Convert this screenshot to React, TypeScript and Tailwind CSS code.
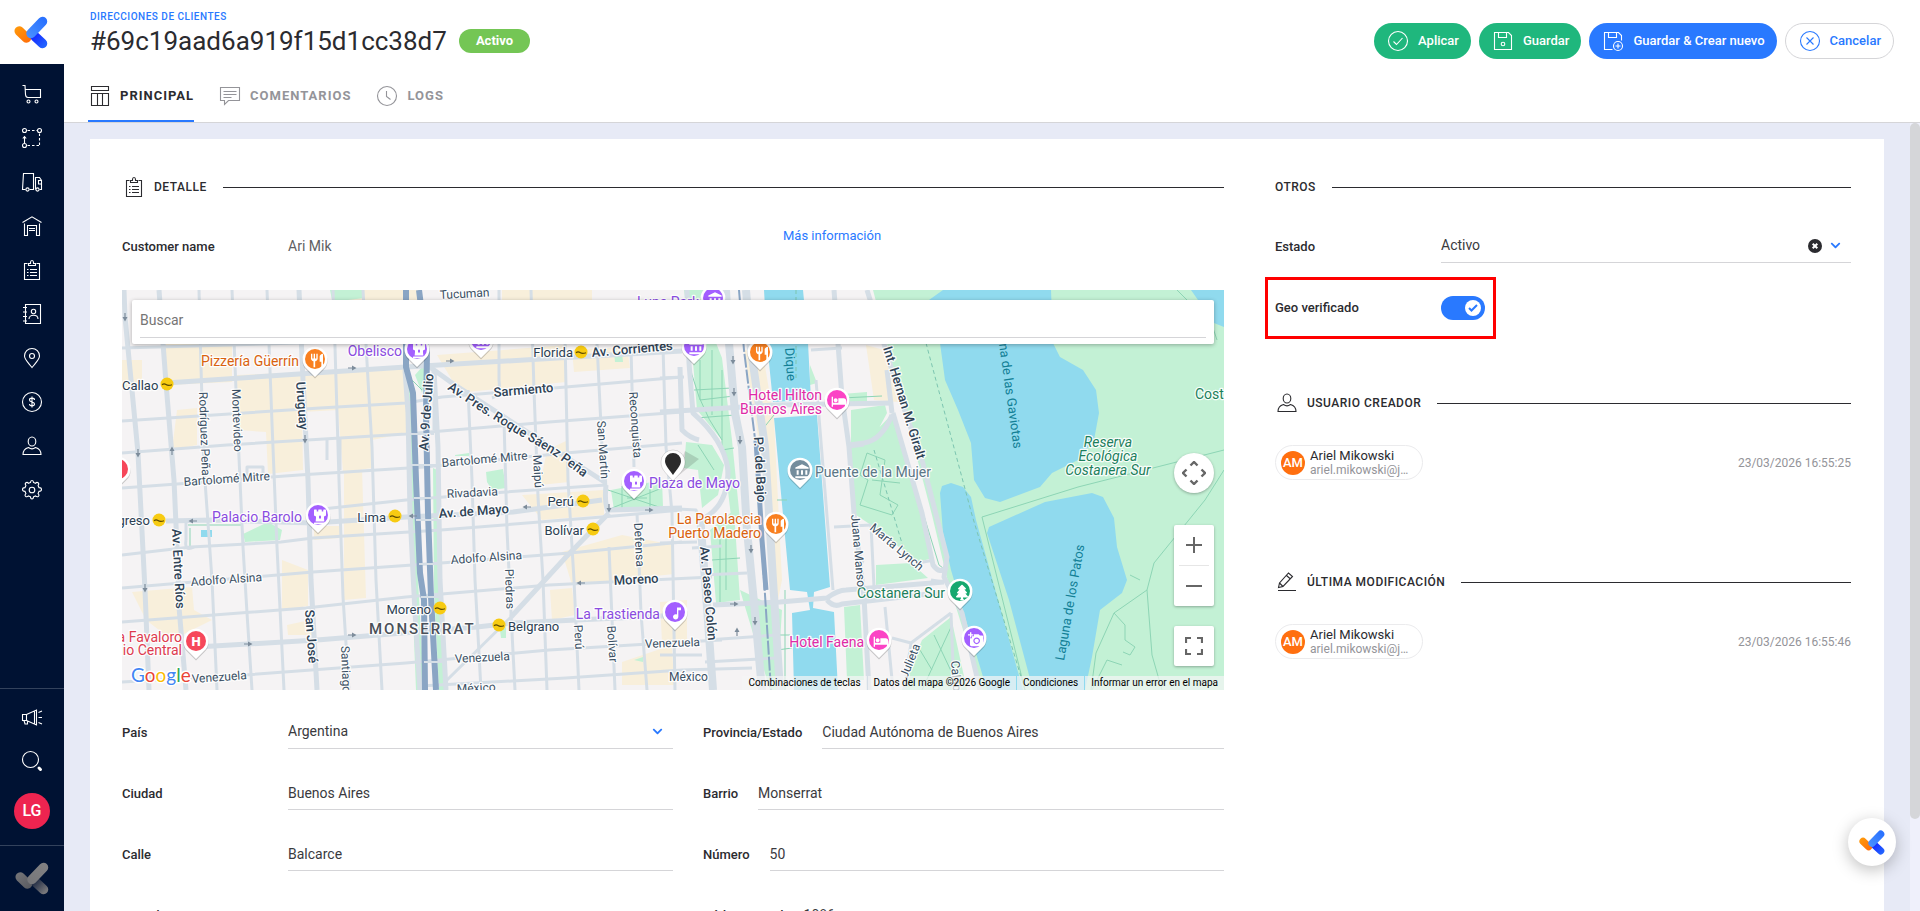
import React from "react";
import { FaChessRook, FaTree, FaChevronDown } from "react-icons/fa";
import { MdRestaurant, MdLocalHotel, MdMusicNote, MdAddAPhoto, MdAccountBalance } from "react-icons/md";

/* ---------- line icons ---------- */

type IconName =
  | "cart" | "route" | "truck" | "warehouse" | "clipboard" | "contacts" | "pin" | "dollar" | "user" | "gear"
  | "megaphone" | "search" | "table" | "comment" | "clock" | "check" | "save" | "saveAdd" | "close" | "pencil";

const shapes: Record<IconName, React.ReactNode> = {
  cart: (
    <>
      <path d="M.5 1.500H3L3.500 10.500Q3.700 13.500 6 13.500H18.500V5.500H3.300" />
      <circle cx="6.500" cy="17.500" r="1.500" />
      <circle cx="14.500" cy="17.500" r="1.500" />
    </>
  ),
  route: (
    <>
      <circle cx="2.500" cy="2.500" r="2" />
      <circle cx="17.500" cy="2.500" r="2" />
      <circle cx="2.500" cy="17.500" r="2" />
      <path d="M5.500 2.500h9.500M17.500 5.500v12M5.500 17.500h12" strokeDasharray="2.500 2" />
      <path d="M2.500 15V8.500M.8 10.500l1.700-2 1.700 2" />
    </>
  ),
  truck: (
    <>
      <path d="M3.500 17.500H.5L1.500 1.500h10v16H7.500" />
      <path d="M13.500 17.500V5.500h4l2 3v9h-2" />
      <path d="M19.500 8.500h-3v3.500h3" />
      <circle cx="5.500" cy="17.500" r="1.600" />
      <circle cx="15.500" cy="17.500" r="1.600" />
    </>
  ),
  warehouse: (
    <>
      <path d="M.5 6.500L10 .8l9.500 5.700" />
      <path d="M2.500 7.500v12h3V9.500h9v10h3v-12" />
      <path d="M7 12.500h6M7 14.500h6" />
    </>
  ),
  clipboard: (
    <>
      <path d="M5.500 3.500h-3v16h15v-16h-3" />
      <path d="M6.500 5.500V3.500h2v-1q0-2 1.500-2t1.500 2v1h2v2z" />
      <path d="M8 9.500h7M8 12.500h7M8 15.500h7M5 9.500h1.500M5 12.500h1.500M5 15.500h1.500" />
    </>
  ),
  contacts: (
    <>
      <path d="M3.500.5h15v19h-15z" />
      <path d="M1 3.500h4M1 8h4M1 12.500h4M1 17h4" />
      <circle cx="11.500" cy="7.500" r="2.200" />
      <path d="M7 15c0-5 9-5 9 0" />
    </>
  ),
  pin: (
    <>
      <path d="M10 19.500C7 15.500 2.500 11.500 2.500 8a7.500 7.500 0 0 1 15 0c0 3.500-4.500 7.500-7.500 11.500z" />
      <circle cx="10" cy="8" r="2.500" />
    </>
  ),
  dollar: (
    <>
      <circle cx="10" cy="10" r="9.500" />
      <path d="M12.500 8c0-2.500-5-2.500-5 0 0 2.300 5 1.700 5 4 0 2.500-5 2.500-5 0M10 4.500v11" />
    </>
  ),
  user: (
    <>
      <ellipse cx="10" cy="5.500" rx="3.800" ry="4.500" />
      <path d="M1 18.500c0-4.500 2-6 5.500-7 2 1.500 5 1.500 7 0 3.500 1 5.500 2.500 5.500 7z" />
    </>
  ),
  gear: (
    <>
      <circle cx="10" cy="10" r="2.800" />
      <path d="M8.500 2.500Q8.500.5 10 .5t1.500 2l2 .8q1.300-1.500 2.600-.5t0 2.800l.9 2q2.500 0 2.500 1.900t-2.500 1.900l-.9 2.200q1.500 1.600.3 2.700t-2.900-.4l-2 .9q0 2.200-1.500 2.200t-1.500-2.200l-2-.9q-1.700 1.500-2.900.4t.3-2.700L3 11.400Q.5 11.400.5 9.500T3 7.600l.9-2q-1.300-1.800 0-2.800t2.600.5z" />
    </>
  ),
  megaphone: (
    <>
      <path d="M.5 7.500h4v6h-4zM4.500 7.500L14.500 3v15l-10-4.500M12.500 4v13M2 13.500l1 3.500h2.500v-3" />
      <path d="M16.500 5.500l3.500-1.500M16.500 10.500H20M16.500 15.500l3.500 1.500" />
    </>
  ),
  search: (
    <>
      <circle cx="8.500" cy="8.500" r="8" />
      <path d="M17 17l1.500 1.500" strokeWidth="3" strokeLinecap="round" />
    </>
  ),
  table: <path d="M1.500.5h17v4h-17zM1.500 7.500h17v12h-17zM7.500 7.500v12M12.500 7.500v12" />,
  comment: <path d="M.5 1.500h19v13H8.500l-4 4v-4h-4zM3.500 5.500h13M3.500 8.500h13M3.500 11.500h8" />,
  clock: (
    <>
      <circle cx="10" cy="10" r="9.500" />
      <path d="M9.500 5v5.500l4 3" />
    </>
  ),
  check: (
    <>
      <circle cx="10" cy="10" r="9.500" />
      <path d="M5.500 10.500l3 3 6-6.500" />
    </>
  ),
  save: (
    <>
      <path d="M1.500 1.500h14l3 3v14h-17zM5.500 1.500v5h8v-5" />
      <circle cx="10" cy="13" r="1.800" />
    </>
  ),
  saveAdd: (
    <>
      <path d="M9.500 18.500h-8v-17h14l3 3v5M5.500 1.500v5h8v-5" />
      <circle cx="15" cy="15" r="4.500" />
      <path d="M15 12.500v5M12.500 15h5" />
    </>
  ),
  close: (
    <>
      <circle cx="10" cy="10" r="9.500" />
      <path d="M6.500 6.500l7 7M13.500 6.500l-7 7" />
    </>
  ),
  pencil: <path d="M1 18.500h18M1.500 15.500l1-4.500L11.500 1l4 3.500L6 14.500zM2.500 11L6 14.500M9.500 3.500l4 3.500" />,
};

function Icon({ name, className = "size-5" }: { name: IconName; className?: string }) {
  return (
    <svg viewBox="0 0 20 20" className={`shrink-0 overflow-visible ${className}`} fill="none" stroke="currentColor" strokeWidth="1.100" aria-hidden="true">
      {shapes[name]}
    </svg>
  );
}

function Logo({ className, muted = false }: { className: string; muted?: boolean }) {
  const id = React.useId();
  return (
    <svg viewBox="0 0 34 33" className={className} fill="none" strokeLinecap="round" strokeWidth="9.500" aria-hidden="true">
      <defs>
        <linearGradient id={`${id}o`} gradientUnits="userSpaceOnUse" x1="0" y1="10" x2="14" y2="27">
          <stop stopColor={muted ? "#77777a" : "#ff9d0a"} />
          <stop offset="1" stopColor={muted ? "#5a5b61" : "#ff6f0a"} />
        </linearGradient>
        <linearGradient id={`${id}d`} gradientUnits="userSpaceOnUse" x1="19" y1="19" x2="30" y2="30">
          <stop stopColor={muted ? "#1c2740" : "#1426ff"} />
          <stop offset="1" stopColor={muted ? "#77777a" : "#2262ff"} />
        </linearGradient>
        <linearGradient id={`${id}b`} gradientUnits="userSpaceOnUse" x1="30" y1="4" x2="13" y2="21">
          <stop stopColor={muted ? "#808082" : "#2a72ff"} />
          <stop offset="1" stopColor={muted ? "#77777a" : "#4a92ff"} />
        </linearGradient>
      </defs>
      <path d="M5.200 15l7.300 7" stroke={`url(#${id}o)`} />
      <path d="M21 20.500l7.500 7" stroke={`url(#${id}d)`} />
      <path d="M28.500 5.500L17 17.500" stroke={`url(#${id}b)`} />
    </svg>
  );
}

/* ---------- map ---------- */

const streets = [
  "M77 0L79 77 82 177 86 233 90 290 95 400", "M110 0L114 100 118 190 121 257 125 323 130 400",
  "M145 0L150 133 155 257 162 400", "M211 0L213 57 217 190 221 307 227 400", "M241 0L246 90 250 157 254 290 260 400",
  "M346 100L350 190 353 290 359 400", "M377 0V90Q379 105 370 108", "M382 130L385 240 389 323 393 400",
  "M409 0L412 100 416 207 421 290 425 400", "M443 50L446 190 452 290 457 400", "M475 53L480 157 484 197M487 257L493 400",
  "M509 57L512 177M515 223L519 323 525 400", "M541 57L544 157 550 223 553 400",
  "M0 58L284 50", "M0 131L198 118 284 113 320 107 444 97 560 87", "M0 163L105 155 284 144 427 132 560 122",
  "M0 198L177 185 302 177 444 163 560 153", "M191 220L284 210 384 202 484 195",
  "M0 265L69 257 159 252 191 248 319 240 480 227 560 220", "M0 298L191 282 319 273 448 263 560 252",
  "M0 332L184 318 284 307 427 295 590 287", "M0 392L123 385 284 373 427 360 560 352 600 350",
  "M298 396L444 388 560 380 630 378", "M538 88L562 87", "M125 190V177H141V190", "M64 250Q62 262 72 257M64 250V232",
  "M205 170V150M218 180V148", "M325 390L389 327", "M312 140V110", "M749 235L752 297", "M712 237L749 235",
  "M727 157L742 155M742 272L732 268", "M829 323L832 400", "M763 317L771 400", "M789 353L829 323M770 348L789 353 782 400",
  "M689 60L720 58M694 90L711 300", "M570 258L600 256M580 285L625 283M585 350L655 345M583 372L655 368",
  "M538 253L575 252M538 365H580", "M809 290L822 292M796 273L812 270", "M538 218L574 220 578 230",
];
const midRoads = [
  "M2 0L3 27 16 163 23 300 27 400", "M37 0L44 93 52 190 55 257 57 317 64 400", "M177 0L181 90 186 190 189 290 195 400",
  "M283 80L286 123 288 223 293 323 298 400", "M312 80L316 157 318 290 324 400", "M44 93L177 84 284 77 452 67 560 61",
  "M44 231L91 230 191 233 284 227 391 222 480 210", "M75 357L195 350 355 337 391 333 560 325", "M294 67L330 93 484 193",
  "M487 223L444 267 389 327", "M484 195Q482 215 487 223M487 220L560 218", "M538 122L654 115 770 113",
  "M565 0L567 73 571 123 Q602 150 606 180 Q606 218 578 230", "M558 77L560 140Q568 148 577 150",
  "M745 0L763 57 778 107 800 170 825 267 822 287 840 323 858 400", "M712 0L720 107 727 157 732 223 742 307 747 400",
  "M591 315L658 312 705 308Q716 300 724 300L822 292", "M705 310Q712 318 720 314L815 303",
  "M771 123L800 223 811 275Q818 285 825 277", "M770 125Q760 150 742 153L727 155", "M765 80L770 123",
];
const wideRoads = [
  "M578 225L583 290 591 400", "M604 0L607 53 613 123 620 157 625 240 633 323 640 400", "M624 0L629 60 643 157 651 290 658 400",
];
const highways = [
  "M284 0V77L291 103 294 190 298 283 302 310 303 400", "M297 0L305 63 304 123 306 223 309 307 314 400",
];

const greens =
  "M751 0H1102V400H860L838 330 825 288 810 225 779 107ZM727 155L752 143 771 123 811 268 796 272 749 235 731 223ZM729 120L763 115 765 123 756 140 742 153H729ZM754 275L789 273 806 288 754 295ZM722 317L738 315 742 390 725 390ZM800 350L829 327 845 400H780ZM208 0H242V8L226 10H210ZM285 85L290 105 296 290 302 400H294L286 200ZM300 77L306 80 300 103 293 85ZM311 178L315 180 316 290 326 400H317L312 300ZM121 244L146 232 160 240 158 250 123 252ZM364 182L381 179 384 198 370 200 365 192ZM489 200L540 190 541 217 492 220ZM333 165L347 163V166H333ZM492 62L500 61 501 72H493ZM512 370L521 367V372ZM378 340L384 337V348H379ZM562 0L582 0 585 30 600 68 610 150 618 230 610 235 600 150 575 120 570 60ZM564 152L590 155 602 175 596 205 580 218 576 180 562 178ZM588 240L612 220 618 310 594 313ZM0 131L8 130V132H0ZM688 75L695 93 688 95ZM720 104L745 102V112L720 113ZM618 300L660 320 655 400H648ZM510 250L520 246V252Z";

const waters =
  "M642 0H681L686 53 689 110 651 112 645 53ZM652 128L695 125 708 297 692 302 691 318 712 322 716 400H672L670 323 688 320 685 302 668 300ZM807 10L821 0H929L931 53 938 67 961 80 974 100 977 123 972 150 956 170 930 183 918 197 878 212 863 208 852 190 849 153 836 120 823 90 818 53ZM818 203L820 196 829 193 841 197 849 207 854 230 901 400H865L840 317 829 280 821 243ZM867 237L923 212 970 203 981 207 992 228 995 257 1005 290 1000 303 978 320 970 367 963 400H911L887 310 865 243ZM1069 0H1102V37L1092 33 1076 10ZM79 240H90V247H79Z";

const beiges =
  "M40 40H110V92L45 95ZM115 85L284 78V110L285 143 250 150V178L221 182 216 120 180 122 181 180 146 184 144 142 116 140ZM55 120L75 118V155L50 160ZM315 65L445 55 444 92 345 102 330 90ZM450 60L505 57 508 78 452 82ZM425 160L446 150 447 192 418 195ZM192 236L218 236 218 248 192 250ZM10 302L70 297 72 320 90 330 50 350 24 330ZM160 270L186 280V316L160 320ZM222 180L240 178 244 308 222 310ZM400 205L482 200V225L420 230ZM440 262L500 245 552 255 552 284 450 295ZM428 300L450 298 453 325 430 330ZM500 372L550 355 552 395H500ZM622 60L640 58 652 130 660 290 655 315 648 220ZM744 55L762 60 776 112 752 110ZM538 312L565 310V350L540 352ZM0 70H20V95L0 98ZM220 0H300V50H220ZM380 0H470V20H380ZM165 335L188 330 190 345H166Z";

const greenLines =
  "M860 227L903 400M860 227L956 197 1102 160M1102 180L1083 210 1032 273 1025 300 992 323 974 363 969 400M992 323L1003 335V350L1013 357 1008 365 1001 362M1025 300L1030 365 1040 400M1008 285L1018 290M745 163L738 185 746 190 738 215 770 225 776 215 758 205 763 170 745 163M750 190L778 193M771 125L817 275Q825 283 824 268M830 335L800 400M812 345L838 400M795 355L810 380M565 60Q572 110 600 150M578 70V110L612 106M572 100L610 98M574 128L613 125M590 60V125M600 80V160L612 158M576 155L592 180M598 245V312M590 270L618 268M604 245V300M655 320V400M655 345L668 345M655 360L670 358M663 300V400M486 200L540 218M490 218L540 198M500 196V220M528 196V220M505 208H525M1090 35L1095 50M1055 0L1065 10M970 400L985 370 1000 375M720 108L760 106M640 140L652 125M655 210H665M66 235H120M68 257V238M120 235L122 255M285 85L300 100";

const pinBody = "M0 18L-8.500 9.500A12.500 12.500 0 1 1 8.500 9.500Z";

const pins: { x: number; y: number; color: string; icon?: React.ComponentType<any>; letter?: string }[] = [
  { x: 193, y: 69, color: "#f98020", icon: MdRestaurant },
  { x: 295, y: 59, color: "#a35fff", icon: FaChessRook },
  { x: 359, y: 50, color: "#a35fff", icon: MdAccountBalance },
  { x: 196, y: 225, color: "#a35fff", icon: FaChessRook },
  { x: 512, y: 191, color: "#a35fff", icon: FaChessRook },
  { x: 553, y: 322, color: "#a35fff", icon: MdMusicNote },
  { x: 591, y: 8, color: "#a35fff", icon: MdAccountBalance },
  { x: 572, y: 56, color: "#a35fff", icon: MdAccountBalance },
  { x: 638, y: 62, color: "#f98020", icon: MdRestaurant },
  { x: 654, y: 234, color: "#f98020", icon: MdRestaurant },
  { x: 715, y: 110, color: "#fb43c5", icon: MdLocalHotel },
  { x: 757, y: 350, color: "#fb43c5", icon: MdLocalHotel },
  { x: 678, y: 180, color: "#748d9d", icon: MdAccountBalance },
  { x: 838, y: 301, color: "#15a86f", icon: FaTree },
  { x: 852, y: 348, color: "#a35fff", icon: MdAddAPhoto },
  { x: 74, y: 351, color: "#f6475a", letter: "H" },
  { x: -4, y: 179, color: "#f6475a" },
];

const subway = [[45, 94], [459, 62], [37, 230], [273, 226], [461, 211], [471, 239], [318, 318], [377, 335]];

type Label = [text: string, x: number, y: number, size: number, color: string, rotate?: number, anchor?: "start" | "middle" | "end"];
const ink = "#2f4356";
const stop = "#2c4053";
const road = "#3b5064";
const violet = "#8a4be0";
const orange = "#d9620f";
const pink = "#df2aa6";
const teal = "#128096";
const forest = "#1c7f5c";
const rose = "#dd3b50";

const labels: Label[] = [
  ["Tucumán", 318, 9, 12, road, -3], ["Pizzería Güerrín", 177, 76, 14, orange, 0, "end"], ["Obelisco", 280, 66, 14, violet, 0, "end"],
  ["Florida", 451, 67, 13, stop, 0, "end"], ["Av. Corrientes", 470, 67, 13, ink, -5], ["Callao", 0, 100, 13, stop], ["Sarmiento", 372, 107, 13, ink, -5],
  ["Rodríguez Peña", 77, 102, 12, road, 88], ["Montevideo", 110, 99, 12, road, 88], ["Uruguay", 174, 92, 13, ink, 86],
  ["Bartolomé Mitre", 62, 196, 12, road, -4], ["Bartolomé Mitre", 320, 177, 12, road, -5], ["Rivadavia", 325, 208, 12, road, -3],
  ["Maipú", 411, 165, 12, road, 87], ["San Martín", 475, 131, 12, road, 86], ["Reconquista", 507, 102, 12, road, 86],
  ["Av. 9 de Julio", 306, 161, 13, ink, -86], ["Perú", 452, 216, 13, stop, 0, "end"], ["Bolívar", 462, 245, 13, stop, 0, "end"],
  ["Lima", 264, 232, 13, stop, 0, "end"], ["greso", 28, 235, 13, stop, 0, "end"], ["Palacio Barolo", 180, 232, 14, violet, 0, "end"],
  ["Av. de Mayo", 317, 228, 13, ink, -4], ["Plaza de Mayo", 527, 198, 14, violet], ["Adolfo Alsina", 69, 296, 12, road, -4],
  ["Adolfo Alsina", 329, 274, 12, road, -4], ["Av. Entre Ríos", 50, 239, 13, ink, 87], ["San José", 183, 320, 13, ink, 86],
  ["Santiago", 219, 356, 12, road, 88], ["Piedras", 383, 279, 12, road, 88], ["Defensa", 512, 233, 12, road, 87],
  ["Moreno", 492, 295, 13, ink, -3], ["Moreno", 309, 324, 13, stop, 0, "end"], ["Belgrano", 386, 341, 13, stop],
  ["La Trastienda", 538, 329, 14, violet, 0, "end"], ["Perú", 452, 335, 12, road, 87], ["Bolívar", 485, 336, 12, road, 86],
  ["Venezuela", 70, 393, 12, road, -4], ["Venezuela", 333, 373, 12, road, -3], ["Venezuela", 523, 358, 12, road, -2],
  ["México", 335, 403, 12, road, -3], ["México", 547, 391, 12, road], ["a Favaloro", 60, 352, 14, rose, 0, "end"],
  ["io Central", 60, 365, 14, rose, 0, "end"], ["Luna Park", 577, 17, 14, violet, 0, "end"],
  ["Hotel Hilton", 700, 110, 14, pink, 0, "end"], ["Buenos Aires", 700, 124, 14, pink, 0, "end"],
  ["Puente de la Mujer", 693, 187, 14, "#5b7686"], ["La Parolaccia", 639, 234, 14, orange, 0, "end"], ["Puerto Madero", 639, 248, 14, orange, 0, "end"],
  ["Hotel Faena", 742, 357, 14, pink, 0, "end"], ["Costanera Sur", 823, 308, 14, forest, 0, "end"], ["Cost", 1073, 109, 14, forest],
  ["P.º del Bajo", 632, 147, 13, ink, 87], ["Av. Paseo Colón", 578, 257, 13, ink, 85], ["Dique", 663, 58, 13, teal, 86],
  ["Int. Hernan M. Giralt", 761, 58, 13, ink, 73], ["Juana Manso", 729, 225, 12, road, 85], ["Marta Lynch", 747, 239, 12, road, 40],
  ["na de las Gaviotas", 877, 54, 13, teal, 82], ["Laguna de los Patos", 942, 371, 13, teal, -80],
  ["Calabria", 829, 371, 12, road, 86], ["Julieta", 785, 389, 12, road, -68],
];

const arrows: [number, number, number][] = [
  [3, 27, 90], [16, 163, 90], [23, 298, 90], [50, 161, -90], [183, 149, 90], [230, 78, 0], [328, 71, 0], [71, 231, 180],
  [291, 226, 180], [405, 217, 180], [527, 220, 0], [459, 293, 180], [126, 354, 0], [230, 345, 0], [487, 218, 90],
  [611, 70, 90], [612, 102, 90], [618, 150, 90], [629, 259, 90], [633, 331, 90], [615, 342, -90], [612, 314, 0],
];

function CityMap() {
  return (
    <svg viewBox="0 0 1102 400" preserveAspectRatio="xMidYMid slice" className="block size-full" role="img" aria-label="Mapa">
      <rect width="1102" height="400" fill="#f5f3f4" />
      <path d={beiges} fill="#f8efdb" />
      <path d={greens} fill="#c3f1d5" />
      <path d={waters} fill="#90daee" />
      <path d={greenLines} fill="none" stroke="#8dd5b5" strokeWidth="1" />
      <path d="M804 53L850 225 903 400M752 160L785 270M674 0V90" fill="none" stroke="#7cc5b0" strokeDasharray="4 3" />
      <g fill="none" stroke="#d5dee6" strokeLinejoin="round">
        {streets.map((d) => <path key={d} d={d} strokeWidth="3" />)}
        {midRoads.map((d) => <path key={d} d={d} strokeWidth="5" />)}
        {wideRoads.map((d) => <path key={d} d={d} strokeWidth="8" />)}
      </g>
      <g fill="none" stroke="#8aa5c4" strokeLinejoin="round">
        {highways.map((d) => <path key={d} d={d} strokeWidth="6" />)}
        <path d="M617 0L622 60 634 157 641 273 649 400" strokeWidth="2" strokeDasharray="14 2" />
        <path d="M634 150L640 250 644 300" strokeWidth="5" />
      </g>
      <g stroke="#d5dee6" strokeWidth="2">
        <path d="M287 144H312M289 175H314M292 208H315M294 230H316M297 274H318M299 307H320M302 372H324" />
      </g>
      <g fill="#7d8c9b">
        {arrows.map(([x, y, r]) => (
          <path key={`${x}-${y}`} d="M-4-.6H0V-2.500L4.500 0 0 2.500V.6H-4Z" transform={`translate(${x} ${y}) rotate(${r})`} />
        ))}
      </g>

      <defs>
        <path id="roquePath" d="M325 99L355 119 395 144 430 164 472 195" />
      </defs>
      <g fontFamily="Roboto, sans-serif" stroke="#ffffff" strokeWidth="2.500" strokeLinejoin="round" paintOrder="stroke" strokeOpacity=".9">
        {labels.map(([text, x, y, size, color, rotate = 0, anchor = "start"]) => (
          <text
            key={`${text}${x}`}
            fontSize={size}
            fill={color}
            fontWeight={color === ink ? 500 : 400}
            stroke={color === teal ? "none" : "#ffffff"}
            textAnchor={anchor}
            transform={`translate(${x} ${y}) rotate(${rotate})`}
          >
            {text}
          </text>
        ))}
        <text fontSize="13" fill={ink} fontWeight="500">
          <textPath href="#roquePath">Av. Pres. Roque Sáenz Peña</textPath>
        </text>
        <text fontSize="14" fontStyle="italic" fill={forest} textAnchor="middle">
          <tspan x="986" y="157">Reserva</tspan>
          <tspan x="986" y="171">Ecológica</tspan>
          <tspan x="986" y="185">Costanera Sur</tspan>
        </text>
        <text x="247" y="344" fontSize="15" letterSpacing="2" fill="#4a5059" fontWeight="500">MONSERRAT</text>
      </g>

      {subway.map(([x, y]) => (
        <g key={`${x}-${y}`} transform={`translate(${x} ${y})`}>
          <circle r="6.500" fill="#f7cb12" />
          <path d="M-5 .8Q-3-1-1 .5T5 .8" stroke="#5c4a00" strokeWidth="1.200" fill="none" />
        </g>
      ))}

      {pins.map(({ x, y, color, icon: Glyph, letter }) => (
        <g key={`${x}-${y}`} transform={`translate(${x} ${y})`}>
          <path d={pinBody} fill="#00000030" transform="translate(0 1.500)" />
          <path d={pinBody} fill="#fff" />
          <circle r="10" fill={color} />
          {Glyph && <Glyph x={-6} y={-6.5} width={12} height={12} color="#fff" />}
          {letter && <text textAnchor="middle" y="5" fontSize="13" fontWeight="900" fill="#fff" fontFamily="Roboto, sans-serif">{letter}</text>}
        </g>
      ))}

      <g transform="translate(551 173)">
        <path d="M0 17L26-4 12-12Z" fill="#00000022" />
        <path d="M0 18C-6 11-12 7-12-1A12 12 0 1 1 12-1C12 7 6 11 0 18Z" fill="#fff" stroke="#00000022" />
        <path d="M0 12C-3 7-8 3-8-2A8 8 0 1 1 8-2C8 3 3 7 0 12Z" fill="#2b2b2b" />
      </g>

      <text x="9" y="392" fontSize="19" fontFamily="Lato, sans-serif" stroke="#fff" strokeWidth="3" paintOrder="stroke" strokeLinejoin="round">
        <tspan fill="#4285f4">G</tspan>
        <tspan fill="#ea4335">o</tspan>
        <tspan fill="#fbbc04">o</tspan>
        <tspan fill="#4285f4">g</tspan>
        <tspan fill="#34a853">l</tspan>
        <tspan fill="#ea4335">e</tspan>
      </text>
    </svg>
  );
}

function MapPanel() {
  const control = "flex size-10 items-center justify-center text-[#666666]";
  return (
    <div className="relative h-[400px] overflow-hidden bg-[#f5f3f4]">
      <CityMap />
      <div className="absolute inset-x-[10px] top-[10px] h-11 rounded-[2px] bg-white px-2 shadow-[0_1px_4px_rgba(0,0,0,0.3)]">
        <input
          type="text"
          aria-label="Buscar"
          placeholder="Buscar"
          className="h-[38px] w-full border-b border-[#d5d5d8] bg-transparent pt-[2px] text-sm text-[#2b2b2f] outline-none placeholder:text-[#757575]"
        />
      </div>
      <button type="button" aria-label="Controles de cámara" className={`${control} absolute top-[163px] right-[10px] rounded-full bg-white shadow-[0_1px_3px_rgba(0,0,0,0.3)]`}>
        <svg viewBox="0 0 24 24" className="size-6" fill="none" stroke="currentColor" strokeWidth="2.400" aria-hidden="true">
          <path d="M8.500 4.500L12 1l3.500 3.500M8.500 19.500L12 23l3.500-3.500M4.500 8.500L1 12l3.500 3.500M19.500 8.500L23 12l-3.500 3.500" />
        </svg>
      </button>
      <div className="absolute top-[235px] right-[10px] flex flex-col items-center rounded-[2px] bg-white shadow-[0_1px_3px_rgba(0,0,0,0.3)]">
        <button type="button" aria-label="Acercar" className={control}>
          <svg viewBox="0 0 18 18" className="size-[18px]" stroke="currentColor" strokeWidth="2" aria-hidden="true"><path d="M1 9h16M9 1v16" /></svg>
        </button>
        <div className="h-px w-[30px] bg-[#e6e6e6]" />
        <button type="button" aria-label="Alejar" className={control}>
          <svg viewBox="0 0 18 18" className="size-[18px]" stroke="currentColor" strokeWidth="2" aria-hidden="true"><path d="M1 9h16" /></svg>
        </button>
      </div>
      <button type="button" aria-label="Pantalla completa" className={`${control} absolute right-[10px] bottom-[24px] rounded-[2px] bg-white shadow-[0_1px_3px_rgba(0,0,0,0.3)]`}>
        <svg viewBox="0 0 18 18" className="size-[18px]" fill="none" stroke="currentColor" strokeWidth="2.200" aria-hidden="true">
          <path d="M1 6V1h5M12 1h5v5M17 12v5h-5M6 17H1v-5" />
        </svg>
      </button>
      <div className="absolute right-0 bottom-0 flex h-[14px] gap-px text-[10px] leading-[14px] text-black">
        <button type="button" className="bg-[#f5f5f5]/70 px-[6px]">Combinaciones de teclas</button>
        <span className="bg-[#f5f5f5]/70 px-[6px]">Datos del mapa ©2026 Google</span>
        <a href="#condiciones" className="bg-[#f5f5f5]/70 px-[6px]">Condiciones</a>
        <a href="#error" className="bg-[#f5f5f5]/70 px-[6px]">Informar un error en el mapa</a>
      </div>
    </div>
  );
}

/* ---------- page parts ---------- */

function SectionHeading({ icon, children }: { icon?: IconName; children: React.ReactNode }) {
  return (
    <div className="flex h-6 items-center">
      {icon && <Icon name={icon} className="mr-[10px] ml-[2px] size-5" />}
      <h2 className="text-xs font-medium tracking-[0.5px]">{children}</h2>
      <div className="ml-4 h-px flex-1 bg-[#2b2b2f]" />
    </div>
  );
}

const labelStyle = "shrink-0 text-[13px] font-medium";
const inputStyle = "h-8 w-full min-w-0 appearance-none rounded-none border-b border-[#d5d5d8] bg-transparent text-sm text-[#3a3a3e] outline-none";

function TextField({ id, label, value, wide = false }: { id: string; label: string; value: string; wide?: boolean }) {
  return (
    <div className="flex h-[61px] items-center">
      <label htmlFor={id} className={wide ? `${labelStyle} w-[166px]` : `${labelStyle} mr-5`}>{label}</label>
      <input id={id} type="text" defaultValue={value} className={inputStyle} />
    </div>
  );
}

function SelectField({ id, label, value, clearable = false }: { id: string; label: string; value: string; clearable?: boolean }) {
  return (
    <div className="flex h-[61px] items-center">
      <label htmlFor={id} className={`${labelStyle} w-[166px]`}>{label}</label>
      <div className="relative min-w-0 flex-1">
        <select id={id} defaultValue={value} className={`${inputStyle} pb-[2px]`}>
          <option>{value}</option>
        </select>
        <div className="pointer-events-none absolute top-0 right-[10px] flex h-[30px] items-center gap-2">
          {clearable && (
            <button type="button" aria-label="Borrar" className="pointer-events-auto text-[#2b2b2f]">
              <svg viewBox="0 0 14 14" className="size-[14px]" aria-hidden="true">
                <circle cx="7" cy="7" r="7" fill="currentColor" />
                <path d="M4.700 4.700l4.600 4.600M9.300 4.700L4.700 9.300" stroke="#fff" strokeWidth="2" />
              </svg>
            </button>
          )}
          <FaChevronDown className="size-[11px] text-[#2979ff]" />
        </div>
      </div>
    </div>
  );
}

function UserStamp({ date }: { date: string }) {
  return (
    <div className="flex items-center justify-between">
      <div className="flex h-[35px] w-[148px] items-center gap-[5px] rounded-full border border-[#ebebed] pl-[5px]">
        <div className="flex size-6 items-center justify-center rounded-full bg-[#ff6f0f] text-[13px] font-medium text-white">AM</div>
        <div className="w-[100px] leading-[15px]">
          <div className="text-[13px] leading-[15px]">Ariel Mikowski</div>
          <div className="truncate text-xs leading-[15px] text-[#949499]">ariel.mikowski@jetro.com</div>
        </div>
      </div>
      <time className="text-xs text-[#949499]">{date}</time>
    </div>
  );
}

const menu: [IconName, string][] = [
  ["cart", "Pedidos"], ["route", "Rutas"], ["truck", "Vehículos"], ["warehouse", "Depósitos"], ["clipboard", "Órdenes"],
  ["contacts", "Contactos"], ["pin", "Direcciones"], ["dollar", "Tarifas"], ["user", "Usuarios"], ["gear", "Ajustes"],
];

function Sidebar() {
  return (
    <aside className="flex w-16 shrink-0 flex-col bg-[#001233] text-white">
      <a href="#inicio" aria-label="Inicio" className="flex h-16 items-center justify-center bg-white pr-[2px]">
        <Logo className="h-[33px] w-[34px]" />
      </a>
      <nav className="flex flex-1 flex-col pt-2">
        {menu.map(([icon, label]) => (
          <a key={icon} href={`#${icon}`} aria-label={label} className="flex h-11 items-center justify-center">
            <Icon name={icon} />
          </a>
        ))}
      </nav>
      <div className="flex flex-col items-center border-t border-[#33425c] pt-[6px]">
        <button type="button" aria-label="Novedades" className="flex h-11 items-center"><Icon name="megaphone" /></button>
        <button type="button" aria-label="Búsqueda" className="flex h-11 items-center"><Icon name="search" /></button>
        <button type="button" className="my-[10px] mb-4 size-9 rounded-full bg-[#ee2450] font-medium">LG</button>
      </div>
      <div className="flex h-[66px] items-center justify-center border-t border-[#33425c]">
        <Logo muted className="h-[33px] w-[34px]" />
      </div>
    </aside>
  );
}

const tabs: [IconName, string][] = [["table", "PRINCIPAL"], ["comment", "COMENTARIOS"], ["clock", "LOGS"]];

function Header() {
  const button = "flex h-9 items-center gap-[10px] rounded-full pr-3 pl-[14px] text-[13px] font-medium";
  return (
    <header className="flex h-[123px] shrink-0 flex-col justify-between border-b border-[#d5d5d8] bg-white pr-[26px] pl-6">
      <div className="flex items-start justify-between pl-[2px]">
        <div className="pt-[10px]">
          <div className="text-[10px] leading-[14px] font-medium tracking-[0.5px] text-[#2979ff]">DIRECCIONES DE CLIENTES</div>
          <div className="flex items-center gap-3">
            <h1 className="text-[26px] leading-[34px]">#69c19aad6a919f15d1cc38d7</h1>
            <span className="flex h-6 items-center rounded-full bg-[#74c655] px-[17px] text-[13px] font-bold text-white">Activo</span>
          </div>
        </div>
        <div className="flex gap-2 pt-[23px]">
          <button type="button" className={`${button} bg-[#1fb77d] text-white`}><Icon name="check" />Aplicar</button>
          <button type="button" className={`${button} bg-[#1fb77d] text-white`}><Icon name="save" />Guardar</button>
          <button type="button" className={`${button} bg-[#2979ff] text-white`}><Icon name="saveAdd" />Guardar &amp; Crear nuevo</button>
          <button type="button" className={`${button} border border-[#d5d5d8] text-[#2979ff]`}><Icon name="close" />Cancelar</button>
        </div>
      </div>
      <nav className="flex gap-[26px]">
        {tabs.map(([icon, label], i) => (
          <a
            key={icon}
            href={`#${label.toLowerCase()}`}
            className={`flex h-[52px] items-center gap-[10px] border-b-2 pt-[2px] text-[13px] font-bold tracking-[1px] ${i === 0 ? "border-[#2979ff] pl-[2px]" : "border-transparent text-[#949499]"}`}
          >
            <Icon name={icon} />
            {label}
          </a>
        ))}
      </nav>
    </header>
  );
}

export default function App() {
  return (
    <div className="relative flex h-screen overflow-hidden bg-white font-[Roboto,sans-serif] text-[#2b2b2f]">
      <Sidebar />
      <div className="flex min-w-0 flex-1 flex-col">
        <Header />
        <div className="flex min-h-0 flex-1 bg-[#e7eaf6]">
          <main className="min-w-0 flex-1 overflow-hidden pt-4 pr-[26px] pl-[26px]">
            <div className="grid grid-cols-[1102fr_576fr] gap-x-[51px] bg-white pt-9 pr-[33px] pb-20 pl-8">
              <section>
                <SectionHeading icon="clipboard">DETALLE</SectionHeading>
                <div className="grid h-[91px] grid-cols-[166px_1fr_1fr] text-sm">
                  <div className="pt-[39px] text-[13px] font-medium">Customer name</div>
                  <div className="pt-[37px] text-[#5f5f63]">Ari Mik</div>
                  <a href="#info" className="pt-[28px] pl-[27px] text-[13px] text-[#2979ff]">Más información</a>
                </div>
                <MapPanel />
                <form className="grid grid-cols-2 pt-3">
                  <SelectField id="pais" label="País" value="Argentina" />
                  <div className="pl-[30px]"><TextField id="provincia" label="Provincia/Estado" value="Ciudad Autónoma de Buenos Aires" /></div>
                  <TextField wide id="ciudad" label="Ciudad" value="Buenos Aires" />
                  <div className="pl-[30px]"><TextField id="barrio" label="Barrio" value="Monserrat" /></div>
                  <TextField wide id="calle" label="Calle" value="Balcarce" />
                  <div className="pl-[30px]"><TextField id="numero" label="Número" value="50" /></div>
                  <TextField wide id="entrada" label="Entrada" value="" />
                  <div className="pl-[30px]"><TextField id="postal" label="Código postal" value="1086" /></div>
                </form>
              </section>
              <section>
                <SectionHeading>OTROS</SectionHeading>
                <div className="pt-[17px]">
                  <SelectField clearable id="estado" label="Estado" value="Activo" />
                </div>
                <div className="-ml-[10px] flex h-[62px] w-[231px] items-center border-3 border-[#ff0000] pl-[7px]">
                  <label htmlFor="geo" className={`${labelStyle} w-[166px]`}>Geo verificado</label>
                  <div className="relative flex">
                    <input id="geo" type="checkbox" role="switch" defaultChecked className="h-6 w-11 appearance-none rounded-full bg-[#2979ff]" />
                    <span className="pointer-events-none absolute top-1 right-1 flex size-4 items-center justify-center rounded-full bg-white">
                      <svg viewBox="0 0 10 8" className="h-2 w-[10px]" fill="none" stroke="#2979ff" strokeWidth="2" aria-hidden="true">
                        <path d="M1 4l2.500 2.500L9 1" />
                      </svg>
                    </span>
                  </div>
                </div>
                <div className="pt-[52px]"><SectionHeading icon="user">USUARIO CREADOR</SectionHeading></div>
                <div className="pt-[30px]"><UserStamp date="23/03/2026 16:55:25" /></div>
                <div className="pt-[90px]"><SectionHeading icon="pencil">ÚLTIMA MODIFICACIÓN</SectionHeading></div>
                <div className="pt-[30px]"><UserStamp date="23/03/2026 16:55:46" /></div>
              </section>
            </div>
          </main>
          <div className="w-[10px] shrink-0 bg-[#eff0fb]">
            <div className="h-[696px] rounded-full bg-[#d5d6d9]" />
          </div>
        </div>
      </div>
      <button type="button" aria-label="Asistente" className="absolute right-6 bottom-[45px] flex size-12 items-center justify-center rounded-full bg-white shadow-[0_4px_16px_rgba(0,0,0,0.25)]">
        <Logo className="h-[25px] w-[26px]" />
      </button>
    </div>
  );
}
